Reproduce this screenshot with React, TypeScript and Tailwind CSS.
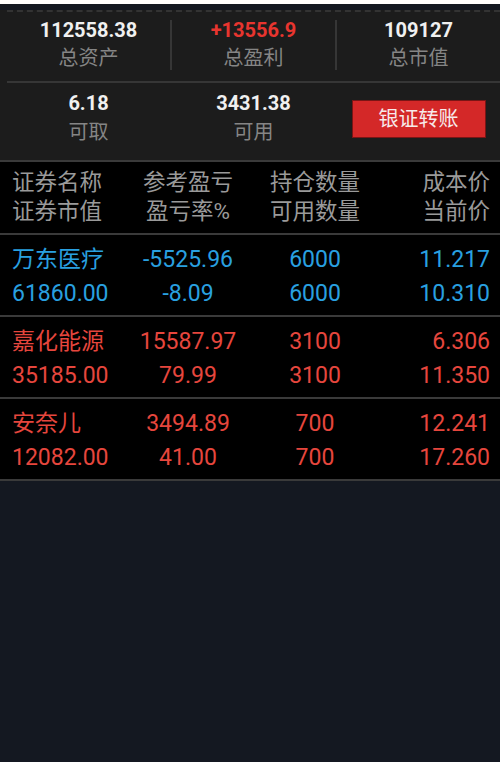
import React from "react";

const FONT = { fontFamily: 'Roboto, "Noto Sans CJK SC", sans-serif' };

type Row = { name: string; mv: string; pl: string; rate: string; hold: string; avail: string; cost: string; price: string; color: string };

const rows: Row[] = [
  { name: "万东医疗", mv: "61860.00", pl: "-5525.96", rate: "-8.09", hold: "6000", avail: "6000", cost: "11.217", price: "10.310", color: "text-[#29a0e0]" },
  { name: "嘉化能源", mv: "35185.00", pl: "15587.97", rate: "79.99", hold: "3100", avail: "3100", cost: "6.306", price: "11.350", color: "text-[#e6463d]" },
  { name: "安奈儿", mv: "12082.00", pl: "3494.89", rate: "41.00", hold: "700", avail: "700", cost: "12.241", price: "17.260", color: "text-[#e6463d]" },
];

function Stat({ value, label, valueClass }: { value: string; label: string; valueClass?: string }) {
  return (
    <div className="flex-1 flex flex-col items-center">
      <div className={`text-[20px] leading-[26px] font-bold ${valueClass ?? "text-[#f0f0f0]"}`}>{value}</div>
      <div className="text-[20px] leading-[30px] text-[#858585]">{label}</div>
    </div>
  );
}

export default function App() {
  return (
    <div className="w-[500px] h-[762px] bg-[#141821] overflow-hidden" style={FONT}>
      <div className="h-[4px] bg-white" />
      <div className="bg-[#1c1c1c] pl-[7px]">
        <div className="mt-[6px] border-t-2 border-dashed border-[#333333]" />
        <div className="flex pt-[5px] pb-[8px]">
          <Stat value="112558.38" label="总资产" />
          <div className="w-[2px] my-[3px] bg-[#363636]" />
          <Stat value="+13556.9" label="总盈利" valueClass="text-[#e8352f]" />
          <div className="w-[2px] my-[3px] bg-[#363636]" />
          <Stat value="109127" label="总市值" />
        </div>
        <div className="h-[2px] bg-[#363636]" />
        <div className="flex pt-[7px] pb-[12px]">
          <div className="flex-1 flex flex-col items-center">
            <div className="text-[20px] leading-[26px] font-bold text-[#f0f0f0]">6.18</div>
            <div className="text-[20px] leading-[32px] text-[#858585]">可取</div>
          </div>
          <div className="w-[2px]" />
          <div className="flex-1 flex flex-col items-center">
            <div className="text-[20px] leading-[26px] font-bold text-[#f0f0f0]">3431.38</div>
            <div className="text-[20px] leading-[32px] text-[#858585]">可用</div>
          </div>
          <div className="w-[2px]" />
          <div className="flex-1 flex items-center justify-center">
            <div className="w-[134px] h-[38px] bg-[#d42828] border border-[#7a1515] flex items-center justify-center text-[20px] text-[#f7eaea]">
              银证转账
            </div>
          </div>
        </div>
      </div>
      <div className="bg-black border-t-2 border-[#3a3a3a]">
        <div className="grid grid-cols-[116px_120px_134px_1fr] pl-[12px] pr-[10px] pt-[6px] pb-[7px] text-[22.5px] leading-[29px] text-[#9a9a9a]">
          <div>证券名称</div>
          <div className="text-center">参考盈亏</div>
          <div className="text-center">持仓数量</div>
          <div className="text-right">成本价</div>
          <div>证券市值</div>
          <div className="text-center">盈亏率%</div>
          <div className="text-center">可用数量</div>
          <div className="text-right">当前价</div>
        </div>
        {rows.map((r) => (
          <div key={r.name} className={`grid grid-cols-[116px_120px_134px_1fr] pl-[12px] pr-[10px] pt-[8px] pb-[4px] border-t-2 border-[#3a3a3a] text-[23px] leading-[34px] ${r.color}`}>
            <div>{r.name}</div>
            <div className="text-center">{r.pl}</div>
            <div className="text-center">{r.hold}</div>
            <div className="text-right">{r.cost}</div>
            <div>{r.mv}</div>
            <div className="text-center">{r.rate}</div>
            <div className="text-center">{r.avail}</div>
            <div className="text-right">{r.price}</div>
          </div>
        ))}
        <div className="h-[2px] bg-[#3a3a3a]" />
      </div>
    </div>
  );
}
